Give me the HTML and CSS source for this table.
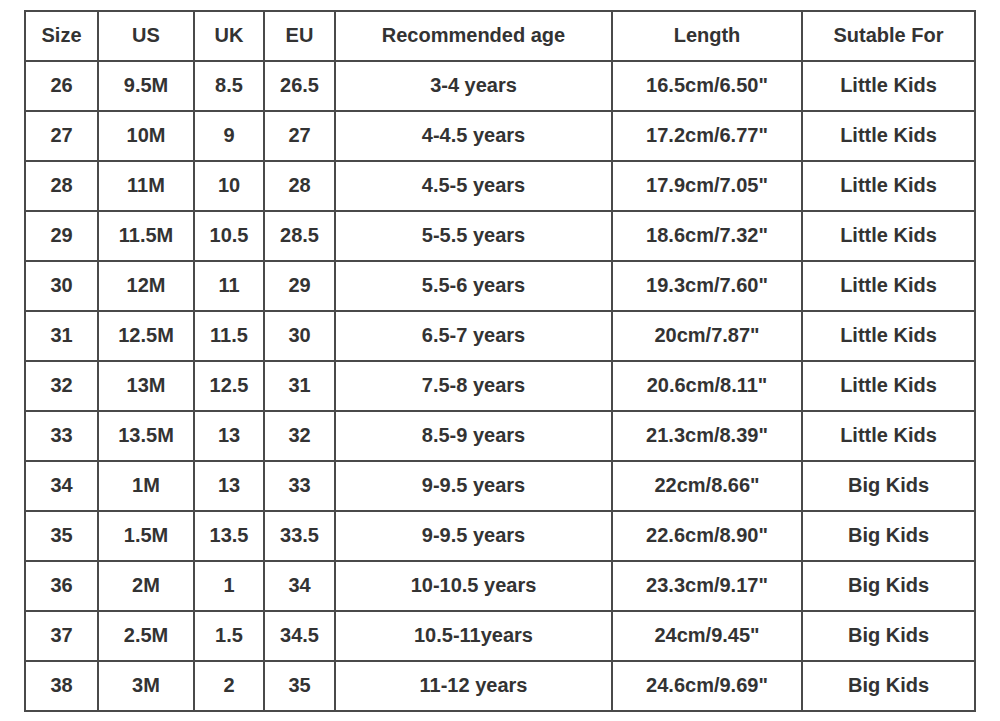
FILE: index.html
```html
<!DOCTYPE html>
<html>
<head>
<meta charset="utf-8">
<link rel="stylesheet" href="styles.css">
</head>
<body>
<table class="size-table">
<colgroup>
<col class="c1"><col class="c2"><col class="c3"><col class="c4"><col class="c5"><col class="c6"><col class="c7">
</colgroup>
<thead>
<tr><th>Size</th><th>US</th><th>UK</th><th>EU</th><th>Recommended age</th><th>Length</th><th>Sutable For</th></tr>
</thead>
<tbody>
<tr><td>26</td><td>9.5M</td><td>8.5</td><td>26.5</td><td>3-4 years</td><td>16.5cm/6.50"</td><td>Little Kids</td></tr>
<tr><td>27</td><td>10M</td><td>9</td><td>27</td><td>4-4.5 years</td><td>17.2cm/6.77"</td><td>Little Kids</td></tr>
<tr><td>28</td><td>11M</td><td>10</td><td>28</td><td>4.5-5 years</td><td>17.9cm/7.05"</td><td>Little Kids</td></tr>
<tr><td>29</td><td>11.5M</td><td>10.5</td><td>28.5</td><td>5-5.5 years</td><td>18.6cm/7.32"</td><td>Little Kids</td></tr>
<tr><td>30</td><td>12M</td><td>11</td><td>29</td><td>5.5-6 years</td><td>19.3cm/7.60"</td><td>Little Kids</td></tr>
<tr><td>31</td><td>12.5M</td><td>11.5</td><td>30</td><td>6.5-7 years</td><td>20cm/7.87"</td><td>Little Kids</td></tr>
<tr><td>32</td><td>13M</td><td>12.5</td><td>31</td><td>7.5-8 years</td><td>20.6cm/8.11"</td><td>Little Kids</td></tr>
<tr><td>33</td><td>13.5M</td><td>13</td><td>32</td><td>8.5-9 years</td><td>21.3cm/8.39"</td><td>Little Kids</td></tr>
<tr><td>34</td><td>1M</td><td>13</td><td>33</td><td>9-9.5 years</td><td>22cm/8.66"</td><td>Big Kids</td></tr>
<tr><td>35</td><td>1.5M</td><td>13.5</td><td>33.5</td><td>9-9.5 years</td><td>22.6cm/8.90"</td><td>Big Kids</td></tr>
<tr><td>36</td><td>2M</td><td>1</td><td>34</td><td>10-10.5 years</td><td>23.3cm/9.17"</td><td>Big Kids</td></tr>
<tr><td>37</td><td>2.5M</td><td>1.5</td><td>34.5</td><td>10.5-11years</td><td>24cm/9.45"</td><td>Big Kids</td></tr>
<tr><td>38</td><td>3M</td><td>2</td><td>35</td><td>11-12 years</td><td>24.6cm/9.69"</td><td>Big Kids</td></tr>
</tbody>
</table>
</body>
</html>
```
FILE: styles.css
```css
html, body {
  margin: 0;
  padding: 0;
  background: #ffffff;
}
body {
  padding: 10px 0 0 24px;
  font-family: "Liberation Sans", Arial, sans-serif;
}
.size-table {
  border-collapse: collapse;
  table-layout: fixed;
  width: 950px;
  color: #333333;
  font-size: 20px;
  font-weight: bold;
}
.size-table th,
.size-table td {
  border: 2px solid #4a4a4a;
  height: 46px;
  padding: 0 0 2px 0;
  text-align: center;
  vertical-align: middle;
  font-weight: bold;
}
.c1 { width: 73px; }
.c2 { width: 96px; }
.c3 { width: 70px; }
.c4 { width: 71px; }
.c5 { width: 277px; }
.c6 { width: 190px; }
.c7 { width: 173px; }
```
